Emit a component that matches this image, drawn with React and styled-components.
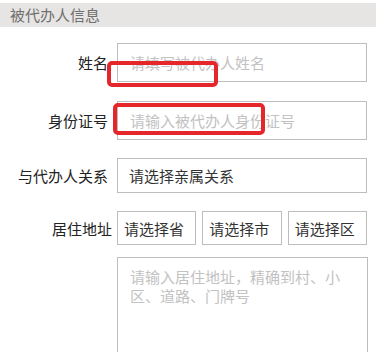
import React from "react";
import styled, { createGlobalStyle } from "styled-components";

const Global = createGlobalStyle`
  html, body { margin: 0; padding: 0; background: #fff; }
  body { font-family: "Noto Sans CJK SC", "Noto Sans", sans-serif; }
  * { box-sizing: border-box; }
`;

const Page = styled.div`
  position: relative;
  width: 376px;
  height: 352px;
  overflow: hidden;
  padding-top: 3px;
  background: #fff;
`;

const SectionHeader = styled.div`
  height: 24px;
  background: #e6e5e3;
  color: #707070;
  font-size: 15px;
  line-height: 24px;
  padding-left: 10px;
`;

const Form = styled.div`
  display: flex;
  flex-direction: column;
  padding-top: 16px;
`;

const Row = styled.div`
  display: flex;
  align-items: center;
  margin-bottom: ${(p) => p.$gap}px;
`;

const Label = styled.div`
  width: ${(p) => p.$w || 108}px;
  margin-right: ${(p) => 117 - (p.$w || 108)}px;
  text-align: right;
  font-size: 15px;
  color: #222;
  white-space: nowrap;
`;

const Field = styled.div`
  width: 250px;
  height: ${(p) => p.$h}px;
  border: 1px solid #bdbdbd;
  display: flex;
  align-items: center;
  padding-left: ${(p) => p.$pad || 12}px;
  font-size: 15px;
  color: ${(p) => (p.$placeholder ? "#c2c2c2" : "#333")};
`;

const Selects = styled.div`
  width: 250px;
  display: flex;
  gap: 6px;
`;

const SelectBox = styled.div`
  flex: 1;
  height: 34px;
  border: 1px solid #bdbdbd;
  display: flex;
  align-items: center;
  padding-left: 6px;
  font-size: 15px;
  color: #333;
  white-space: nowrap;
`;

const TextArea = styled.div`
  margin-left: 117px;
  width: 251px;
  height: 120px;
  border: 1px solid #bdbdbd;
  padding: 9px 12px;
  font-size: 15px;
  line-height: 19px;
  color: #c2c2c2;
`;

const Mark = styled.div`
  position: absolute;
  border: 4px solid #e5262a;
  border-radius: 5px;
  pointer-events: none;
`;

export default function App() {
  return (
    <>
      <Global />
      <Page>
        <SectionHeader>被代办人信息</SectionHeader>
        <Form>
          <Row $gap={19}>
            <Label>姓名</Label>
            <Field $h={39} $placeholder>请填写被代办人姓名</Field>
          </Row>
          <Row $gap={18}>
            <Label>身份证号</Label>
            <Field $h={39} $placeholder>请输入被代办人身份证号</Field>
          </Row>
          <Row $gap={18}>
            <Label>与代办人关系</Label>
            <Field $h={35} $pad={11}>请选择亲属关系</Field>
          </Row>
          <Row $gap={12}>
            <Label $w={112}>居住地址</Label>
            <Selects>
              <SelectBox>请选择省</SelectBox>
              <SelectBox>请选择市</SelectBox>
              <SelectBox>请选择区</SelectBox>
            </Selects>
          </Row>
          <TextArea>请输入居住地址，精确到村、小区、道路、门牌号</TextArea>
        </Form>
        <Mark style={{ left: 107, top: 61, width: 111, height: 26 }} />
        <Mark style={{ left: 113, top: 103, width: 152, height: 32 }} />
      </Page>
    </>
  );
}
